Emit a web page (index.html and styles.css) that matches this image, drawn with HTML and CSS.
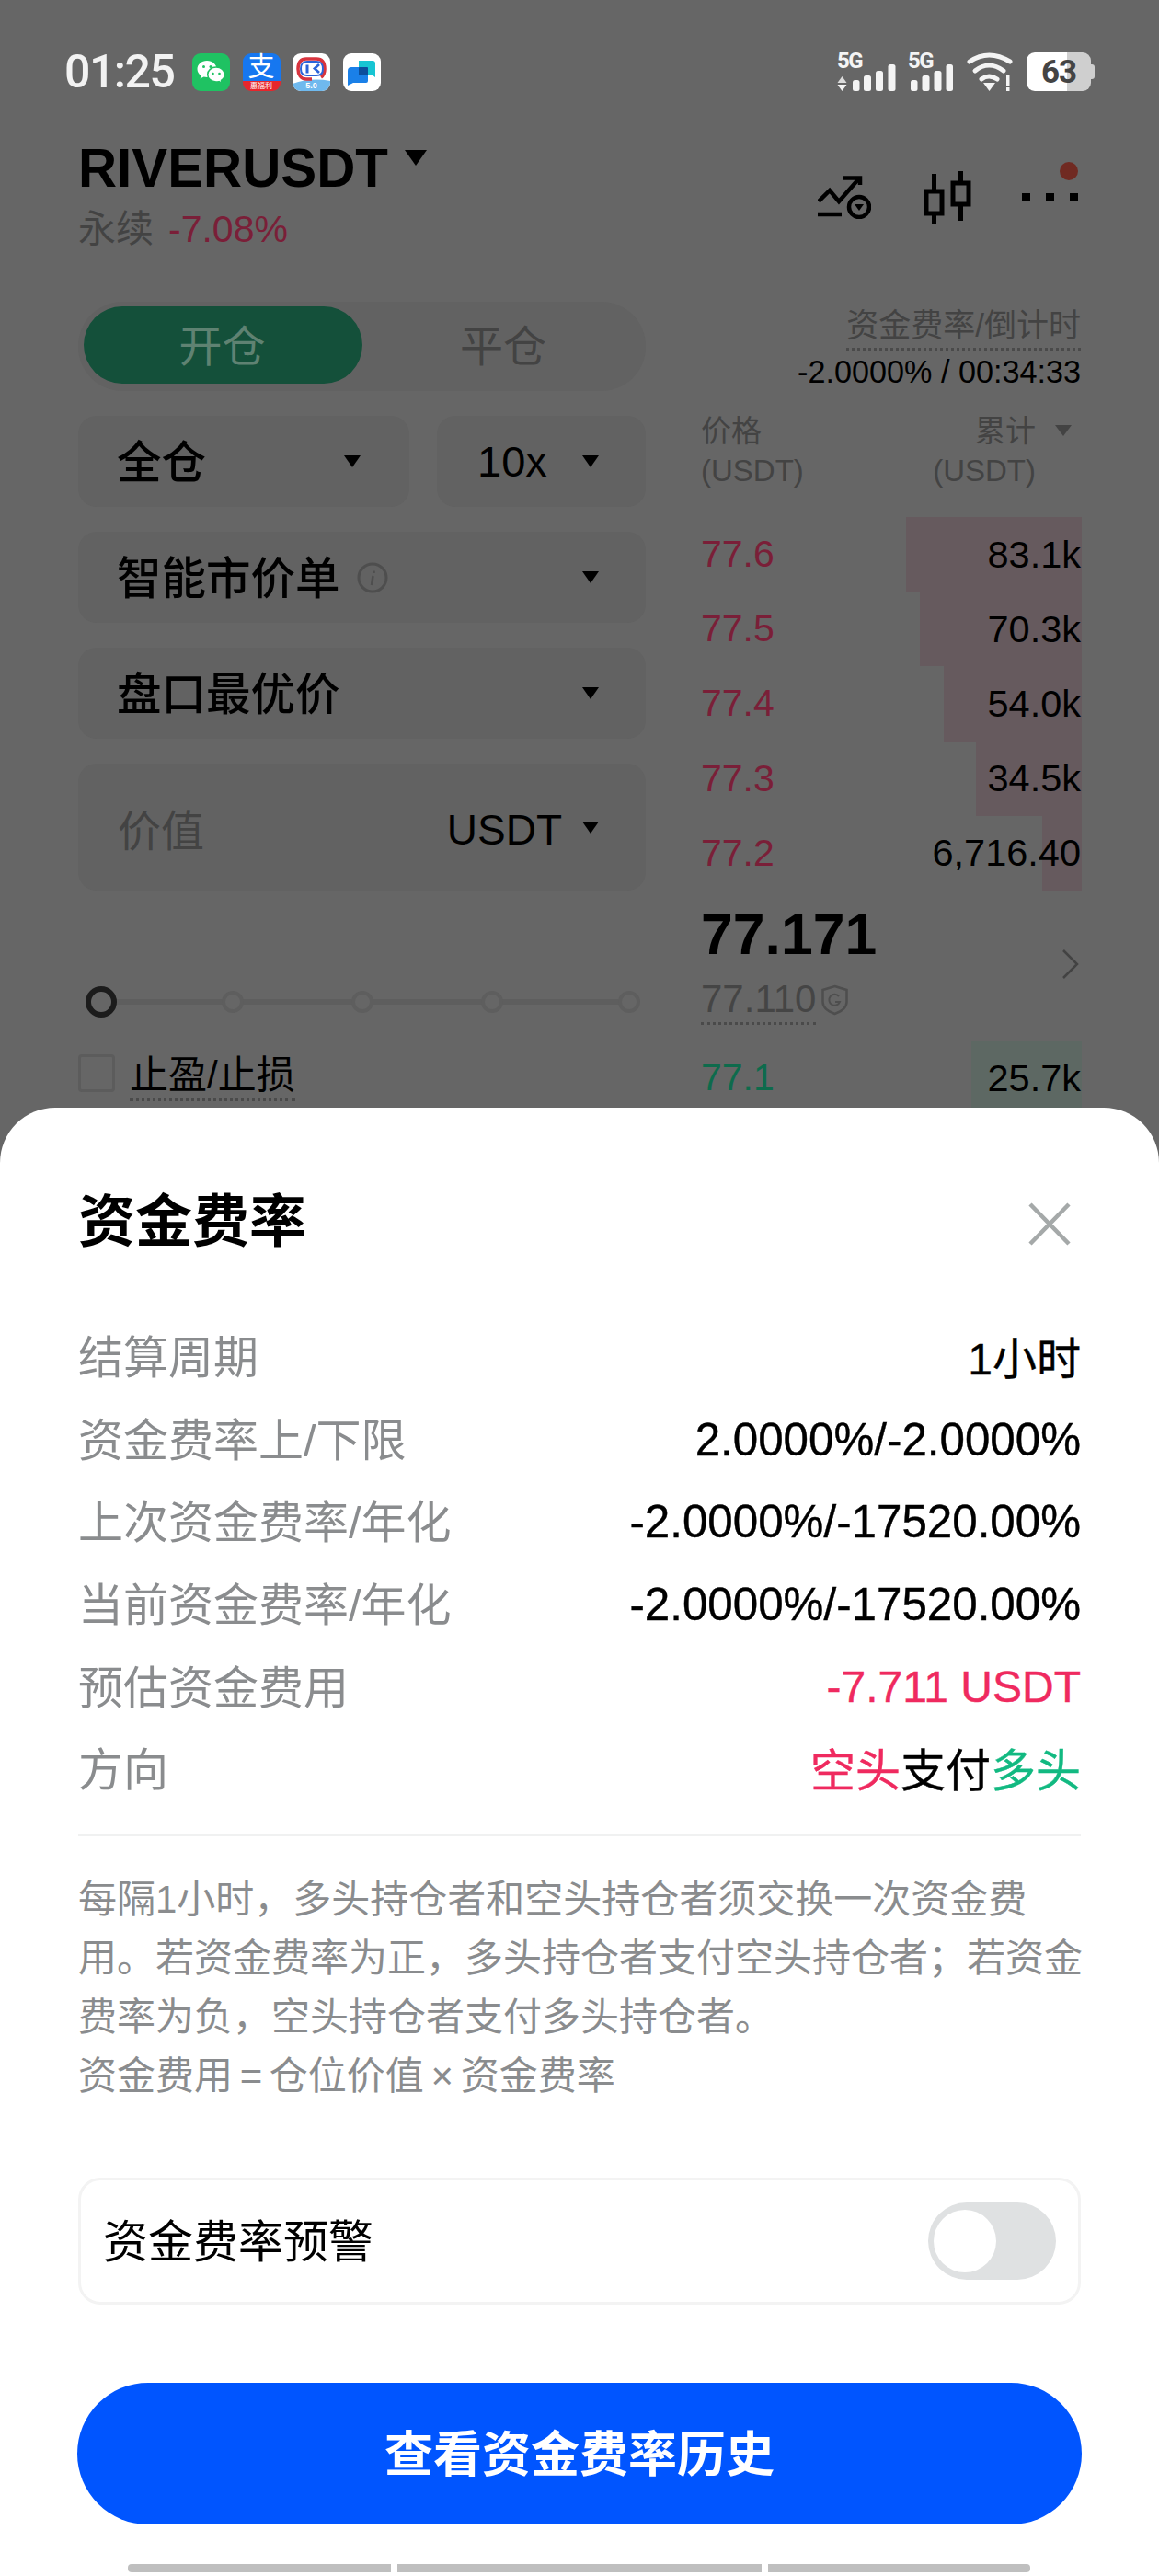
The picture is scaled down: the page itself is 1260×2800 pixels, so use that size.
FILE: index.html
```html
<!DOCTYPE html>
<html lang="zh-CN">
<head>
<meta charset="utf-8">
<title>资金费率</title>
<link rel="stylesheet" href="styles.css">
</head>
<body>
<div class="page">

	<div class="status">
		<span class="clock">01:25</span>
		<div class="app-icons">
			<svg class="app" viewBox="0 0 41 41">
				<rect width="41" height="41" rx="9" fill="#1fc262"/>
				<path d="M16 8c-6 0-10.500 4-10.500 9 0 3 1.500 5.500 4 7l-.8 3.500 3.800-2c1.200.3 2.300.5 3.500.5 6 0 10.500-4 10.500-9s-4.500-9-10.500-9z" fill="#fff"/>
				<path d="M26 15c-5.300 0-9.300 3.500-9.300 8s4 8 9.300 8c1 0 2-.1 3-.4l3.200 1.800-.7-3c2.300-1.500 3.800-3.800 3.800-6.400 0-4.500-4-8-9.300-8z" fill="#fff" stroke="#1fc262" stroke-width="1.500"/>
				<circle cx="12.500" cy="14.500" r="1.500" fill="#1fc262"/>
				<circle cx="20" cy="14.500" r="1.500" fill="#1fc262"/>
				<circle cx="22.500" cy="22" r="1.300" fill="#1fc262"/>
				<circle cx="29.500" cy="22" r="1.300" fill="#1fc262"/>
			</svg>
			<div class="app app-ali">
				<span class="ali-zhi">支</span>
				<span class="ali-tag">惠福利</span>
			</div>
			<div class="app app-face">
				<svg class="face" viewBox="0 0 41 41">
					<path d="M0 33q20-7 41-3v2a9 9 0 0 1-9 9H9a9 9 0 0 1-9-9z" fill="#6fb9ee"/>
					<path d="M31 26c3-2 4-4 4-9 0-7-3-11-9-11H15C9 6 6 10 6 17c0 6 3 11 9 11h6" fill="none" stroke="#d8343e" stroke-width="3.500"/>
					<path d="M9 17c0-6 2-8 7-8h10c5 0 7 2 7 8 0 5-2 7-7 7H16c-5 0-7-2-7-7z" fill="none" stroke="#2b63d8" stroke-width="2"/>
					<rect x="14.500" y="12.500" width="3" height="9" fill="#2b63d8"/>
					<path d="M29 12l-5 4.500 5 4.500" fill="none" stroke="#2b63d8" stroke-width="2.800"/>
				</svg>
				<span class="face-ver">5.0</span>
			</div>
			<svg class="app" viewBox="0 0 41 41">
				<rect width="41" height="41" rx="9" fill="#fff"/>
				<path d="M17 8h15a3 3 0 0 1 3 3v15l-4-3H17z" fill="#17c5d3"/>
				<path d="M9 15h16a2 2 0 0 1 2 2v13a2 2 0 0 1-2 2H11l-6 3V19a4 4 0 0 1 4-4z" fill="#1a80e8"/>
				<rect x="17" y="15" width="10" height="9" rx="1" fill="#0c4e9c"/>
			</svg>
		</div>
		<div class="status-right">
			<div class="signal-box">
				<span class="five-g five-g-a">5G</span>
				<span class="five-g five-g-b">5G</span>
				<svg class="signal" viewBox="0 0 126 42">
					<path d="M5.500 26l5 7H.500z" fill="#dcdcdc"/>
					<path d="M5.500 42l5-7H.500z" fill="#f4f4f4"/>
					<g fill="#f4f4f4">
						<rect x="17" y="30" width="7.500" height="12" rx="2.500"/>
						<rect x="29" y="25" width="8" height="17" rx="2.500"/>
						<rect x="42" y="20" width="8" height="22" rx="2.500"/>
						<rect x="55.500" y="13" width="8" height="29" rx="2.500"/>
						<rect x="80" y="30" width="7.500" height="12" rx="2.500"/>
						<rect x="92.500" y="25" width="8" height="17" rx="2.500"/>
						<rect x="105.500" y="20" width="8" height="22" rx="2.500"/>
						<rect x="118.500" y="13" width="7.500" height="29" rx="2.500"/>
					</g>
				</svg>
			</div>
			<svg class="wifi" viewBox="0 0 52 42">
				<g fill="none" stroke="#f4f4f4" stroke-width="5" stroke-linecap="round">
					<path d="M3 10Q24-4 47 10"/>
					<path d="M9 20Q24 8 40 20"/>
					<path d="M16 29Q24 23 33 29"/>
				</g>
				<path d="M18 33h13l-6.500 9z" fill="#f4f4f4"/>
				<rect x="43" y="25" width="3.500" height="11" fill="#f4f4f4"/>
				<rect x="43" y="38" width="3.500" height="4" fill="#f4f4f4"/>
			</svg>
			<div class="battery"><span>63</span></div>
		</div>
	</div>

	<div class="head">
		<div>
			<div class="pair">RIVERUSDT<i class="caret caret-big"></i></div>
			<div class="pair-sub"><span class="muted">永续</span><span class="red">-7.08%</span></div>
		</div>
		<div class="head-icons">
			<svg class="icon-alert" viewBox="0 0 58 47">
				<g fill="none" stroke="#000" stroke-width="4.500">
					<path d="M1 28l12-12 10 12L45 3"/>
					<path d="M28 2.500h18V10"/>
					<path d="M0 42h26"/>
					<circle cx="45" cy="34" r="11"/>
				</g>
				<path d="M40 31h10l-5 7z"/>
			</svg>
			<svg class="icon-candle" viewBox="0 0 52 57">
				<g fill="none" stroke="#000" stroke-width="5">
					<rect x="3" y="22" width="17" height="24"/>
					<rect x="32" y="13" width="17" height="23"/>
					<path d="M11.500 3v19M11.500 46v11M40.500 0v13M40.500 36v18"/>
				</g>
			</svg>
			<div class="more"><i></i><i></i><i></i><b></b></div>
		</div>
	</div>

	<div class="trade">
		<div class="form">
			<div class="tabs">
				<div class="tab tab-on"><span>开仓</span></div>
				<div class="tab"><span>平仓</span></div>
			</div>
			<div class="field-row">
				<div class="field field-margin"><span class="cjk">全仓</span><i class="caret"></i></div>
				<div class="field field-lever"><span class="latin">10x</span><i class="caret"></i></div>
			</div>
			<div class="field">
				<span class="with-info"><span class="cjk">智能市价单</span>
					<svg class="info" viewBox="0 0 34 34">
						<circle cx="17" cy="17" r="15" fill="none" stroke="#4e4e4e" stroke-width="3"/>
						<path d="M18.500 9.500v2.500M17.500 15l-1.500 10" fill="none" stroke="#4e4e4e" stroke-width="2.500"/>
					</svg>
				</span>
				<i class="caret"></i>
			</div>
			<div class="field"><span class="cjk">盘口最优价</span><i class="caret"></i></div>
			<div class="field field-value">
				<span class="muted">价值</span>
				<span class="unit"><span class="latin latin-low">USDT</span><i class="caret"></i></span>
			</div>
			<div class="slider">
				<i class="knob"></i><i class="dot"></i><i class="dot"></i><i class="dot"></i><i class="dot dot-end"></i>
			</div>
			<div class="tpsl">
				<i class="check"></i>
				<span class="dotted">止盈/止损</span>
			</div>
		</div>

		<div class="book">
			<div class="funding">
				<span class="funding-label dotted">资金费率/倒计时</span>
				<div class="funding-value">-2.0000% / 00:34:33</div>
			</div>
			<div class="book-head">
				<div>价格<br>(USDT)</div>
				<div class="book-head-right">累计<i class="caret caret-small"></i><br><span class="usdt-right">(USDT)</span></div>
			</div>
			<div class="book-rows">
				<div class="level"><i class="depth" style="width:191px"></i><span class="red">77.6</span><span class="qty">83.1k</span></div>
				<div class="level"><i class="depth" style="width:176px"></i><span class="red">77.5</span><span class="qty">70.3k</span></div>
				<div class="level"><i class="depth" style="width:150px"></i><span class="red">77.4</span><span class="qty">54.0k</span></div>
				<div class="level"><i class="depth" style="width:115px"></i><span class="red">77.3</span><span class="qty">34.5k</span></div>
				<div class="level"><i class="depth" style="width:43px"></i><span class="red">77.2</span><span class="qty">6,716.40</span></div>
			</div>
			<div class="last">
				<div>
					<div class="last-price">77.171</div>
					<div class="mark">
						<span class="dotted">77.110</span>
						<svg class="shield" viewBox="0 0 31 34">
							<path d="M15.500 2l13 4v13c0 6-6 10.500-13 13-7-2.500-13-7-13-13V6z" fill="none" stroke="#4e4e4e" stroke-width="2.500"/>
							<path d="M20 13a6 6 0 1 0 1 6h-5" fill="none" stroke="#4e4e4e" stroke-width="2"/>
						</svg>
					</div>
				</div>
				<svg class="chevron" viewBox="0 0 18 32"><path d="M1 1l15 15L1 31" fill="none" stroke="#434343" stroke-width="2.500"/></svg>
			</div>
			<div class="level"><i class="depth depth-buy" style="width:120px"></i><span class="green">77.1</span><span class="qty">25.7k</span></div>
		</div>
	</div>

	<div class="sheet">
		<div class="sheet-head">
			<div class="sheet-title">资金费率</div>
			<svg class="close" viewBox="0 0 46 47"><path d="M2 2l42 43M44 2L2 45" fill="none" stroke="#a5a9a9" stroke-width="4.500"/></svg>
		</div>
		<div class="rows">
			<div class="row"><span class="label">结算周期</span><span class="val">1小时</span></div>
			<div class="row"><span class="label">资金费率上/下限</span><span class="val val-num">2.0000%/-2.0000%</span></div>
			<div class="row"><span class="label">上次资金费率/年化</span><span class="val val-num">-2.0000%/-17520.00%</span></div>
			<div class="row"><span class="label">当前资金费率/年化</span><span class="val val-num">-2.0000%/-17520.00%</span></div>
			<div class="row"><span class="label">预估资金费用</span><span class="val val-red val-fee">-7.711 USDT</span></div>
			<div class="row"><span class="label">方向</span><span class="val val-dir"><span class="val-red">空头</span>支付<span class="val-green">多头</span></span></div>
		</div>
		<div class="divider"></div>
		<p class="note">每隔1小时，多头持仓者和空头持仓者须交换一次资金费<br>用。若资金费率为正，多头持仓者支付空头持仓者；若资金<br>费率为负，空头持仓者支付多头持仓者。<br><span class="note-formula">资金费用 = 仓位价值 × 资金费率</span></p>
		<div class="alert-card">
			<span class="alert-text">资金费率预警</span>
			<div class="toggle"><i></i></div>
		</div>
		<div class="history-btn"><span>查看资金费率历史</span></div>
		<div class="nav-bars"><i class="nav-a"></i><i class="nav-b"></i><i class="nav-c"></i></div>
	</div>

</div>
</body>
</html>
```

FILE: styles.css
```css
* {box-sizing: border-box;}

body {
	margin: 0;
	font-family: "Liberation Sans", "Noto Sans CJK SC", sans-serif;
	color: #000;
}

i {display: block;}

.page {
	position: relative;
	height: 2800px;
	overflow: hidden;
	background: #666;
}

.red {color: #7a1f38;}
.green {color: #0e6b4c;}
.muted {color: #434343;}

.dotted {border-bottom: 3px dotted #4a4a4a;}

.caret {
	width: 0;
	height: 0;
	border-left: 9px solid transparent;
	border-right: 9px solid transparent;
	border-top: 13px solid #000;
}

.caret-big {
	border-left-width: 12px;
	border-right-width: 12px;
	border-top-width: 17px;
	margin: 3px 0 0 18px;
}

.caret-small {
	display: inline-block;
	border-top-color: #434343;
	border-top-width: 12px;
	margin-left: 21px;
	margin-right: -39px;
	vertical-align: 6px;
}

/* status bar */
.status {
	display: flex;
	align-items: center;
	height: 42px;
	margin-top: 57px;
	padding: 0 74px 0 70px;
}

.clock {
	flex: none;
	width: 139px;
	font-family: Roboto, sans-serif;
	font-size: 50px;
	font-weight: 500;
	letter-spacing: -1.500px;
	color: #f2f2f2;
}

.app-icons {
	display: flex;
	gap: 13.500px;
}

.app {
	display: block;
	width: 41px;
	height: 41px;
}

.app-ali {
	display: flex;
	flex-direction: column;
	align-items: center;
	border-radius: 9px;
	background: linear-gradient(#1677f0 73%, #e7262c 73%);
	color: #fff;
}

.ali-zhi {
	height: 30px;
	font-size: 29px;
	line-height: 30px;
}

.ali-tag {
	font-size: 8px;
	line-height: 11px;
}

.app-face {
	position: relative;
	border-radius: 9px;
	background: #fff;
}

.face {
	display: block;
	width: 41px;
	height: 41px;
}

.face-ver {
	position: absolute;
	left: 0;
	right: 0;
	bottom: 0;
	font-size: 9px;
	font-weight: bold;
	line-height: 11px;
	text-align: center;
	color: #fff;
}

.status-right {
	display: flex;
	align-items: center;
	margin-left: auto;
}

.signal-box {
	position: relative;
	width: 126px;
	height: 42px;
}

.signal {
	display: block;
	width: 126px;
	height: 42px;
}

.five-g {
	position: absolute;
	top: -3px;
	font-family: Roboto, sans-serif;
	font-size: 24px;
	font-weight: bold;
	line-height: 24px;
	letter-spacing: -1.500px;
	color: #f4f4f4;
}

.five-g-a {left: 0;}
.five-g-b {left: 77px;}

.wifi {
	width: 52px;
	height: 42px;
	margin: 0 13px 0 15px;
}

.battery {
	position: relative;
	width: 70px;
	height: 42px;
	border-radius: 9px;
	background: linear-gradient(90deg, #fff 63%, #cfcfcf 63%);
	font-family: Roboto, sans-serif;
	font-size: 35px;
	font-weight: bold;
	line-height: 44px;
	letter-spacing: -1px;
	text-align: center;
	color: #444;
}

.battery::after {
	content: "";
	position: absolute;
	left: 70px;
	top: 13px;
	width: 4px;
	height: 16px;
	border-radius: 0 3px 3px 0;
	background: #cfcfcf;
}

/* pair header */
.head {
	display: flex;
	justify-content: space-between;
	height: 123px;
	margin-top: 51px;
	padding: 0 88px 0 85px;
}

.pair {
	display: flex;
	align-items: flex-start;
	height: 66px;
	font-size: 58.300px;
	font-weight: bold;
	line-height: 66px;
}

.pair .caret-big {margin-top: 13px;}

.pair-sub {
	display: flex;
	gap: 16px;
	margin-top: 11px;
	font-size: 41px;
	line-height: 44px;
}

.head-icons {
	display: flex;
	align-items: flex-start;
	gap: 57px;
	padding-top: 36px;
}

.icon-alert {
	width: 58px;
	height: 47px;
	margin-top: 5px;
}

.icon-candle {
	width: 52px;
	height: 57px;
}

.more {
	position: relative;
	display: flex;
	gap: 17px;
	margin-top: 24px;
	margin-left: -2px;
}

.more i {
	width: 9px;
	height: 9px;
	background: #000;
}

.more b {
	position: absolute;
	right: 0;
	top: -34px;
	width: 20px;
	height: 20px;
	border-radius: 50%;
	background: #702a22;
}

/* order form + book */
.trade {
	display: flex;
	margin-top: 55px;
	padding-left: 85px;
}

.form {
	display: flex;
	flex-direction: column;
	gap: 27px;
	width: 617px;
	font-size: 47px;
}

.tabs {
	display: flex;
	height: 97px;
	padding: 5px 0 8px 6px;
	border-radius: 48px;
	background: #626262;
}

.tab {
	flex: 1;
	display: flex;
	align-items: center;
	justify-content: center;
	border-radius: 42px;
	color: #434343;
}

.tab span {margin: 0 2px 5px 0;}

.tab-on {
	flex: none;
	width: 303px;
	background: #14503a;
	color: #5f8272;
}

.field-row {
	display: flex;
	gap: 30px;
}

.field {
	display: flex;
	align-items: center;
	justify-content: space-between;
	height: 99px;
	padding: 0 51px 0 42px;
	border-radius: 20px;
	background: #626262;
}

.cjk {
	margin-bottom: 6px;
	font-size: 48.500px;
	font-weight: 500;
}

.field-margin {
	flex: none;
	width: 360px;
	padding-right: 53px;
}

.field-lever {
	flex: 1;
	padding-left: 44px;
}

.latin {font-size: 47px;}

.latin-low {
	font-size: 46px;
	padding-top: 5px;
}

.with-info {
	display: flex;
	align-items: center;
	gap: 18px;
}

.info {
	width: 34px;
	height: 34px;
}

.field-value {
	height: 138px;
	padding-left: 43px;
}

.unit {
	display: flex;
	align-items: center;
	gap: 22px;
}

.slider {
	position: relative;
	display: flex;
	align-items: center;
	gap: 117px;
	height: 34px;
	margin: 77px 6px 0 8px;
}

.slider::before {
	content: "";
	position: absolute;
	left: 10px;
	right: 10px;
	top: 14px;
	height: 6px;
	background: #5e5e5e;
}

.knob {
	position: relative;
	flex: none;
	width: 34px;
	height: 34px;
	margin-right: -3px;
	border: 6px solid #1c1c1c;
	border-radius: 50%;
	background: #666;
}

.dot {
	position: relative;
	flex: none;
	width: 24px;
	height: 24px;
	border: 4px solid #5e5e5e;
	border-radius: 50%;
	background: #666;
}

.dot-end {margin-left: auto;}

.tpsl {
	display: flex;
	align-items: flex-start;
	gap: 16px;
	margin-top: 13px;
	font-size: 42px;
	line-height: 46px;
}

.check {
	width: 40px;
	height: 41px;
	border: 3px solid #5c5c5c;
	border-radius: 4px;
}

.tpsl .dotted {padding-bottom: 2px;}

.book {
	width: 413px;
	margin-left: 60px;
	font-size: 41px;
}

.funding {
	margin-top: 1px;
	text-align: right;
}

.funding-label {
	display: inline-block;
	font-size: 35px;
	line-height: 37px;
	padding-bottom: 6px;
	color: #434343;
}

.funding-value {
	margin-top: 3px;
	font-size: 34.200px;
	line-height: 40px;
}

.book-head {
	display: flex;
	justify-content: space-between;
	margin-top: 23px;
	font-size: 33px;
	line-height: 43px;
	color: #434343;
}

.book-head-right {
	text-align: right;
	padding-right: 49px;
}

.book-rows {margin-top: 29px;}

.level {
	position: relative;
	display: flex;
	justify-content: space-between;
	align-items: center;
	height: 81.200px;
	font-size: 41px;
}

.depth {
	position: absolute;
	right: -1px;
	top: 0;
	bottom: 0;
	background: #665a5e;
}

.depth-buy {background: #5d6863;}

.level span {position: relative;}

.qty {font-size: 41.500px;}

.last {
	display: flex;
	align-items: center;
	justify-content: space-between;
	margin: 12px 2px 17px 0;
}

.last-price {
	font-size: 62.500px;
	font-weight: bold;
	line-height: 70px;
}

.mark {
	display: flex;
	align-items: flex-start;
	gap: 5px;
	margin-top: 13px;
	font-size: 42px;
	line-height: 46px;
	color: #454545;
}

.mark .dotted {padding-bottom: 2px;}

.shield {
	width: 31px;
	height: 34px;
	margin-top: 7px;
}

.chevron {
	width: 18px;
	height: 32px;
	margin-top: 2px;
}

/* bottom sheet */
.sheet {
	position: absolute;
	left: 0;
	right: 0;
	top: 1204px;
	bottom: 0;
	padding: 85px 85px 0 85px;
	border-radius: 60px 60px 0 0;
	background: #fff;
}

.sheet-head {
	display: flex;
	align-items: center;
	justify-content: space-between;
	height: 80px;
	padding-right: 11px;
}

.sheet-title {
	font-size: 62px;
	font-weight: bold;
	line-height: 80px;
}

.close {
	width: 46px;
	height: 47px;
	margin-top: 2px;
}

.rows {margin-top: 59px;}

.row {
	display: flex;
	align-items: center;
	justify-content: space-between;
	height: 89.600px;
	font-size: 49px;
}

.label {
	margin-bottom: 2px;
	color: #8a8c8e;
}

.val {
	font-size: 48px;
	-webkit-text-stroke: 0.4px;
}

.val-num {
	margin-top: 4px;
	font-size: 49.300px;
}

.val-fee {margin-top: 4px;}
.val-dir {font-size: 49px;}

.val-red {color: #ef2a5f;}
.val-green {color: #12b981;}

.divider {
	height: 2px;
	margin-top: 28px;
	background: #f0f1f1;
}

.note {
	margin: 37px -10px 0 0;
	font-size: 42px;
	line-height: 64px;
	white-space: nowrap;
	color: #8a8c8e;
}

.note-formula {word-spacing: -4px;}

.alert-card {
	display: flex;
	align-items: center;
	justify-content: space-between;
	height: 138px;
	margin-top: 78px;
	padding: 0 24px 0 24px;
	border: 3px solid #f3f3f3;
	border-radius: 24px;
	font-size: 49px;
}

.alert-text {margin-bottom: 6px;}

.toggle {
	width: 139px;
	height: 84px;
	padding: 8px 6px;
	border-radius: 42px;
	background: #dfe1e2;
}

.toggle i {
	width: 68px;
	height: 68px;
	border-radius: 50%;
	background: #fff;
}

.history-btn {
	display: flex;
	align-items: center;
	justify-content: center;
	height: 154px;
	margin: 85px -1px 0 -1px;
	border-radius: 77px;
	background: #0055ff;
	font-size: 53px;
	font-weight: bold;
	color: #fff;
}

.history-btn span {margin-bottom: 6px;}

.nav-bars {
	display: flex;
	gap: 7px;
	margin: 43px 0 0 54px;
}

.nav-bars i {
	height: 9px;
	background: #bfbfbf;
}

.nav-a {width: 286px; border-radius: 4px 0 0 4px;}
.nav-b {width: 396px;}
.nav-c {width: 285px; border-radius: 0 4px 4px 0;}
```
